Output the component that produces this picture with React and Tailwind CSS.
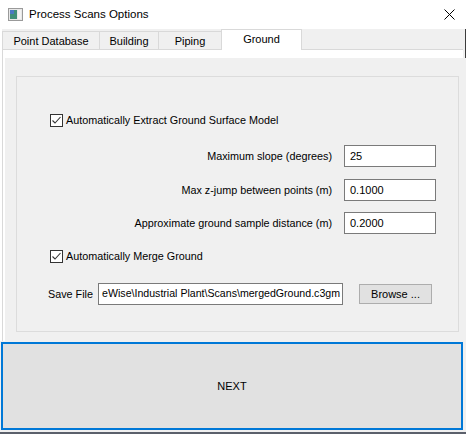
import React from 'react';

// Qt-style "Process Scans Options" dialog, Ground tab
const font = { fontFamily: '"Liberation Sans", Arial, sans-serif' };

const Check = ({ label }) => (
  <div className="flex items-center h-[13px] ml-[33px] gap-[3px]">
    <div className="w-[13px] h-[13px] border border-[#333333] bg-white flex items-center justify-center">
      <svg width="11" height="11" viewBox="0 0 11 11">
        <path d="M1.5 5.5 L4 8 L9.5 2" fill="none" stroke="#333333" strokeWidth="1.1" />
      </svg>
    </div>
    <span className="text-[10.8px] leading-none text-black">{label}</span>
  </div>
);

const Field = ({ label, value }) => (
  <div className="flex items-center justify-end gap-[12px] h-[22px]">
    <span className="text-[10.8px] text-black">{label}</span>
    <div className="w-[92px] h-[22px] border border-[#7a7a7a] bg-white flex items-center pl-[5px] text-[11px] text-black">
      {value}
    </div>
  </div>
);

export default function App() {
  const tabs = [
    { name: 'Point Database', w: 'w-[97px]' },
    { name: 'Building', w: 'w-[59px]' },
    { name: 'Piping', w: 'w-[63px]' },
  ];

  return (
    <div className="w-[466px] h-[434px] bg-[#f0f0f0] overflow-hidden flex flex-col" style={font}>
      {/* Title bar */}
      <div className="h-[29px] bg-white flex items-center shrink-0">
        <svg className="ml-[8px]" width="15" height="13" viewBox="0 0 15 13">
          <rect x="0.5" y="0.5" width="14" height="12" fill="#e8e8e8" stroke="#9a9a9a" />
          <rect x="2" y="2" width="7" height="9" fill="#3f8f7a" />
          <rect x="2" y="2" width="4" height="4" fill="#4b79c4" />
          <rect x="10" y="2" width="3" height="9" fill="#f4f4f4" />
        </svg>
        <span className="ml-[6px] text-[11.5px] text-black">Process Scans Options</span>
        <svg className="ml-auto mr-[11px]" width="11" height="11" viewBox="0 0 11 11">
          <path d="M0.5 0.5 L10.5 10.5 M10.5 0.5 L0.5 10.5" stroke="#000" strokeWidth="1" />
        </svg>
      </div>

      {/* Tabs + pane */}
      <div className="border-l-2 border-white border-r border-r-[#3c3c3c] shrink-0">
        <div className="h-[20px] flex items-end">
          {tabs.map((t) => (
            <div
              key={t.name}
              className={`${t.w} h-[18px] border-l border-t border-[#d9d9d9] flex items-center justify-center pt-[1px] text-[11px] text-black`}
            >
              {t.name}
            </div>
          ))}
          <div className="w-[81px] h-[21px] -mb-px relative z-10 bg-white border-x border-t border-[#d9d9d9] flex items-center justify-center pb-[2px] text-[11px] text-black">
            Ground
          </div>
        </div>

        <div className="w-[461px] h-[292px] border-l border-t border-[#d9d9d9] bg-white pl-[2px] pt-[8px]">
          <div className="h-[283px] w-[470px] bg-[#f0f0f0] pt-[18px]">
            {/* Group box */}
            <div className="ml-[11px] w-[443px] h-[256px] border border-[#dcdcdc] flex flex-col">
              <div className="mt-[37px]">
                <Check label="Automatically Extract Ground Surface Model" />
              </div>

              <div className="mt-[18px] pr-[22px] flex flex-col">
                <Field label="Maximum slope (degrees)" value="25" />
                <div className="mt-[12px]">
                  <Field label="Max z-jump between points (m)" value="0.1000" />
                </div>
                <div className="mt-[11px]">
                  <Field label="Approximate ground sample distance (m)" value="0.2000" />
                </div>
              </div>

              <div className="mt-[16px]">
                <Check label="Automatically Merge Ground" />
              </div>

              <div className="mt-[20px] ml-[31px] flex items-center h-[22px]">
                <span className="text-[10.8px] text-black w-[50px]">Save File</span>
                <div className="w-[245px] h-[22px] border border-[#7a7a7a] bg-white flex items-center justify-end overflow-hidden pr-[2px] whitespace-nowrap text-[10.6px] text-black">
                  eWise\Industrial Plant\Scans\mergedGround.c3gm
                </div>
                <div className="ml-[16px] w-[73px] h-[20px] border border-[#adadad] bg-[#e1e1e1] flex items-center justify-center text-[11px] text-black">
                  Browse ...
                </div>
              </div>
            </div>
          </div>
        </div>
      </div>

      {/* NEXT button */}
      <div className="mt-[1px] ml-[1px] w-[462px] h-[88px] border-2 border-[#0078d7] bg-[#e1e1e1] flex items-center justify-center text-[11px] text-black shrink-0">
        NEXT
      </div>
      <div className="h-[2px] shrink-0" />
      <div className="flex-1 bg-[#5b606b]" />
    </div>
  );
}
